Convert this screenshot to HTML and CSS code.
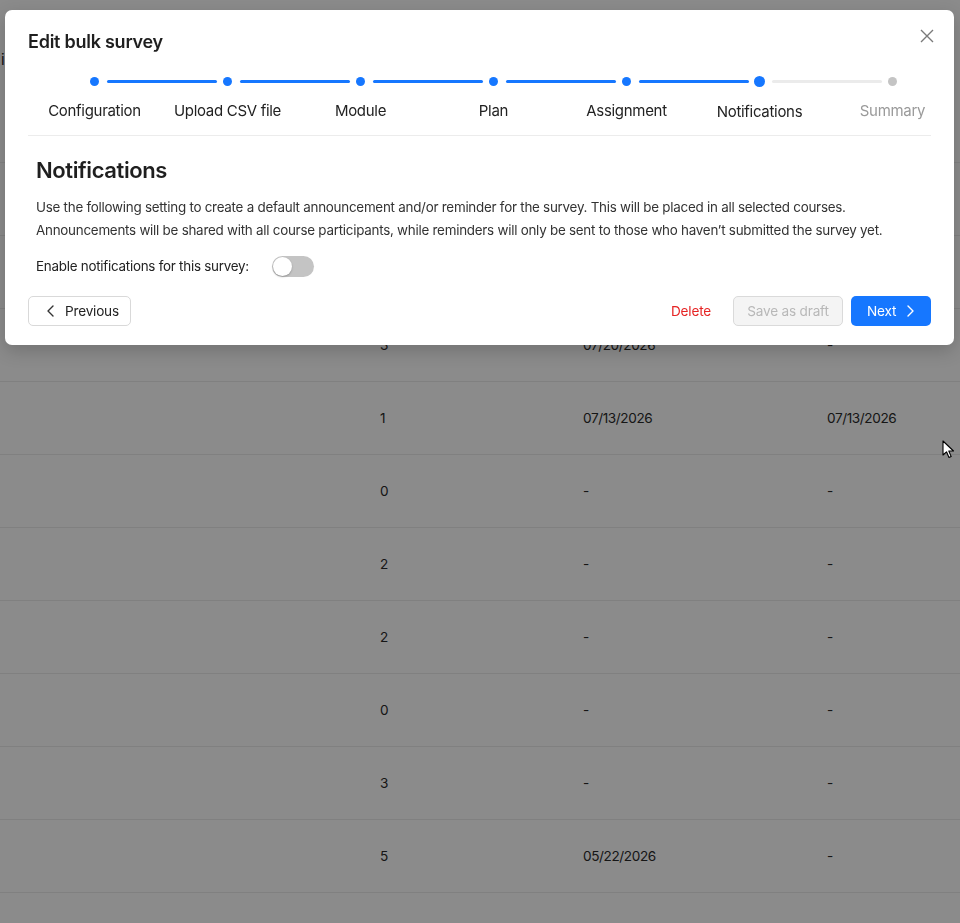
FILE: index.html
```html
<!DOCTYPE html>
<html lang="en">
<head>
<meta charset="utf-8">
<title>Edit bulk survey</title>
<link rel="stylesheet" href="styles.css">
</head>
<body>
<div class="page">
  <div class="page-top"><span class="crumb">i</span></div>
  <div class="table">
    <div class="row"><span class="c-num"></span><span class="c-date"></span><span class="c-last"></span></div>
    <div class="row"><span class="c-num"></span><span class="c-date"></span><span class="c-last"></span></div>
    <div class="row"><span class="c-num">3</span><span class="c-date">07/20/2026</span><span class="c-last">-</span></div>
    <div class="row"><span class="c-num">1</span><span class="c-date">07/13/2026</span><span class="c-last">07/13/2026</span></div>
    <div class="row"><span class="c-num">0</span><span class="c-date">-</span><span class="c-last">-</span></div>
    <div class="row"><span class="c-num">2</span><span class="c-date">-</span><span class="c-last">-</span></div>
    <div class="row"><span class="c-num">2</span><span class="c-date">-</span><span class="c-last">-</span></div>
    <div class="row"><span class="c-num">0</span><span class="c-date">-</span><span class="c-last">-</span></div>
    <div class="row"><span class="c-num">3</span><span class="c-date">-</span><span class="c-last">-</span></div>
    <div class="row"><span class="c-num">5</span><span class="c-date">05/22/2026</span><span class="c-last">-</span></div>
    <div class="row"><span class="c-num"></span><span class="c-date"></span><span class="c-last"></span></div>
  </div>
</div>
<div class="overlay"></div>

<div class="modal">
  <div class="modal-head">
    <h1 class="modal-title">Edit bulk survey</h1>
    <button class="close" aria-label="Close">
      <svg width="14" height="14" viewBox="0 0 14 14"><path d="M1 1 L13 13 M13 1 L1 13" stroke="#7a7a7a" stroke-width="1.4" fill="none"/></svg>
    </button>
  </div>

  <ol class="steps">
    <li class="step done"><span class="dot"></span><span class="label">Configuration</span></li>
    <li class="step done"><span class="dot"></span><span class="label">Upload CSV file</span></li>
    <li class="step done"><span class="dot"></span><span class="label">Module</span></li>
    <li class="step done"><span class="dot"></span><span class="label">Plan</span></li>
    <li class="step done"><span class="dot"></span><span class="label">Assignment</span></li>
    <li class="step active"><span class="dot"></span><span class="label">Notifications</span></li>
    <li class="step todo"><span class="dot"></span><span class="label">Summary</span></li>
  </ol>

  <section class="content">
    <h2 class="section-title">Notifications</h2>
    <p class="desc">Use the following setting to create a default announcement and/or reminder for the survey. This will be placed in all selected courses.<br>Announcements will be shared with all course participants, while reminders will only be sent to those who haven’t submitted the survey yet.</p>
    <div class="toggle-row">
      <span>Enable notifications for this survey:</span>
      <span class="switch"><span class="knob"></span></span>
    </div>
  </section>

  <div class="footer">
    <button class="btn btn-outline">
      <svg class="ico" width="10" height="12" viewBox="0 0 10 12"><path d="M7 1 L2 6 L7 11" stroke="#333" stroke-width="1.4" fill="none" stroke-linecap="round" stroke-linejoin="round"/></svg>
      Previous
    </button>
    <div class="footer-right">
      <button class="btn btn-danger">Delete</button>
      <button class="btn btn-disabled">Save as draft</button>
      <button class="btn btn-primary">Next
        <svg class="ico" width="10" height="12" viewBox="0 0 10 12"><path d="M3 1 L8 6 L3 11" stroke="#fff" stroke-width="1.4" fill="none" stroke-linecap="round" stroke-linejoin="round"/></svg>
      </button>
    </div>
  </div>
</div>

<svg class="cursor" width="14" height="20" viewBox="0 0 14 20"><path d="M1 1 L1 15 L4.5 11.8 L7 17.5 L9.2 16.6 L6.8 11 L11.5 11 Z" fill="#fff" stroke="#000" stroke-width="1.1" stroke-linejoin="round"/></svg>
</body>
</html>
```

FILE: styles.css
```css
* { box-sizing: border-box; }
html, body { margin: 0; padding: 0; }
body {
  font-family: Inter, "Noto Sans", "Liberation Sans", sans-serif;
  color: #222;
  background: #fff;
  width: 960px;
  height: 923px;
  overflow: hidden;
}

.page { width: 960px; }
.page-top {
  height: 163px;
  border-bottom: 1px solid #eee;
  padding-top: 50px;
  font-size: 15px;
}
.crumb { display: inline-block; margin-left: 1px; }

.table { display: flex; flex-direction: column; }
.row {
  height: 73px;
  border-bottom: 1px solid #ebebeb;
  display: grid;
  grid-template-columns: 380px 203px 244px 1fr;
  align-items: center;
  font-size: 13.6px;
  letter-spacing: -0.4px;
  color: #2a2a2a;
}
.c-num { grid-column: 2; }
.c-date { grid-column: 3; }
.c-last { grid-column: 4; }

.overlay {
  position: fixed;
  inset: 0;
  background: rgba(0, 0, 0, 0.455);
}

.modal {
  position: absolute;
  left: 5px;
  top: 10px;
  width: 949px;
  background: #fff;
  border-radius: 7px;
  box-shadow: 0 6px 18px rgba(0, 0, 0, 0.18);
  padding: 20px 23px 19px 23px;
}

.modal-head {
  display: flex;
  justify-content: space-between;
  align-items: flex-start;
  height: 24px;
}
.modal-title {
  margin: 0;
  font-size: 18px;
  line-height: 24px;
  font-weight: 600;
  letter-spacing: -0.25px;
  color: #1f1f1f;
}
.close {
  border: 0;
  background: none;
  padding: 0;
  margin: -1px -3px 0 0;
  width: 14px;
  height: 14px;
  display: flex;
}

.steps {
  list-style: none;
  margin: 23px 0 0 0;
  padding: 0 0 13px 0;
  display: grid;
  grid-template-columns: repeat(7, 133px);
  border-bottom: 1px solid #ececec;
  width: 903px;
}
.step {
  display: flex;
  flex-direction: column;
  align-items: center;
  position: relative;
}
.step:not(:last-child)::after {
  content: "";
  position: absolute;
  top: 3px;
  left: calc(50% + 12px);
  width: 110px;
  height: 3px;
  border-radius: 2px;
  background: #1677ff;
}
.step.active::after,
.step.todo::after { background: #ebebeb; }
.dot {
  width: 9px;
  height: 9px;
  border-radius: 50%;
  background: #1677ff;
}
.step.active .dot {
  width: 11px;
  height: 11px;
  margin-top: -1px;
  margin-bottom: -1px;
}
.step.todo .dot { background: #c4c4c4; }
.label {
  margin-top: 15px;
  font-size: 15px;
  line-height: 20px;
  letter-spacing: -0.3px;
  color: #222;
  white-space: nowrap;
}
.step.active .label { margin-top: 16px; }
.step.todo .label { color: #9a9a9a; }

.content { padding: 0 8px; }
.section-title {
  margin: 20px 0 0 0;
  font-size: 22px;
  line-height: 28px;
  font-weight: 600;
  letter-spacing: -0.4px;
  color: #1f1f1f;
}
.desc {
  margin: 12px 0 0 0;
  font-size: 13.4px;
  line-height: 23px;
  letter-spacing: -0.25px;
  color: #333;
  white-space: nowrap;
}
.toggle-row {
  margin-top: 13px;
  display: flex;
  align-items: center;
  gap: 23px;
  font-size: 13.4px;
  letter-spacing: -0.25px;
  line-height: 22px;
  color: #222;
}
.switch {
  width: 42px;
  height: 21px;
  border-radius: 11px;
  background: #c4c4c4;
  display: flex;
  align-items: center;
  padding: 1px;
}
.knob {
  width: 19px;
  height: 19px;
  border-radius: 50%;
  background: #fff;
  box-shadow: 0 1px 2px rgba(0, 0, 0, 0.25);
}

.footer {
  margin-top: 19px;
  display: flex;
  justify-content: space-between;
  align-items: center;
}
.footer-right { display: flex; gap: 8px; align-items: center; }
.btn {
  font-family: inherit;
  font-size: 13.6px;
  letter-spacing: -0.2px;
  height: 30px;
  border-radius: 5px;
  display: inline-flex;
  align-items: center;
  gap: 7px;
  cursor: pointer;
}
.ico { flex-shrink: 0; }
.btn-outline {
  border: 1px solid #d9d9d9;
  background: #fff;
  color: #222;
  padding: 0 0 0 17px;
  width: 103px;
  gap: 9px;
}
.btn-danger {
  border: 0;
  background: none;
  color: #e62424;
  padding: 0 14px;
}
.btn-disabled {
  border: 1px solid #dadada;
  background: #f4f4f4;
  color: #b8b8b8;
  width: 110px;
  justify-content: center;
  padding: 0;
}
.btn-primary {
  border: 0;
  background: #1677ff;
  color: #fff;
  width: 80px;
  padding: 0 0 0 16px;
  gap: 9px;
}

.cursor {
  position: absolute;
  left: 942px;
  top: 440px;
}
```
